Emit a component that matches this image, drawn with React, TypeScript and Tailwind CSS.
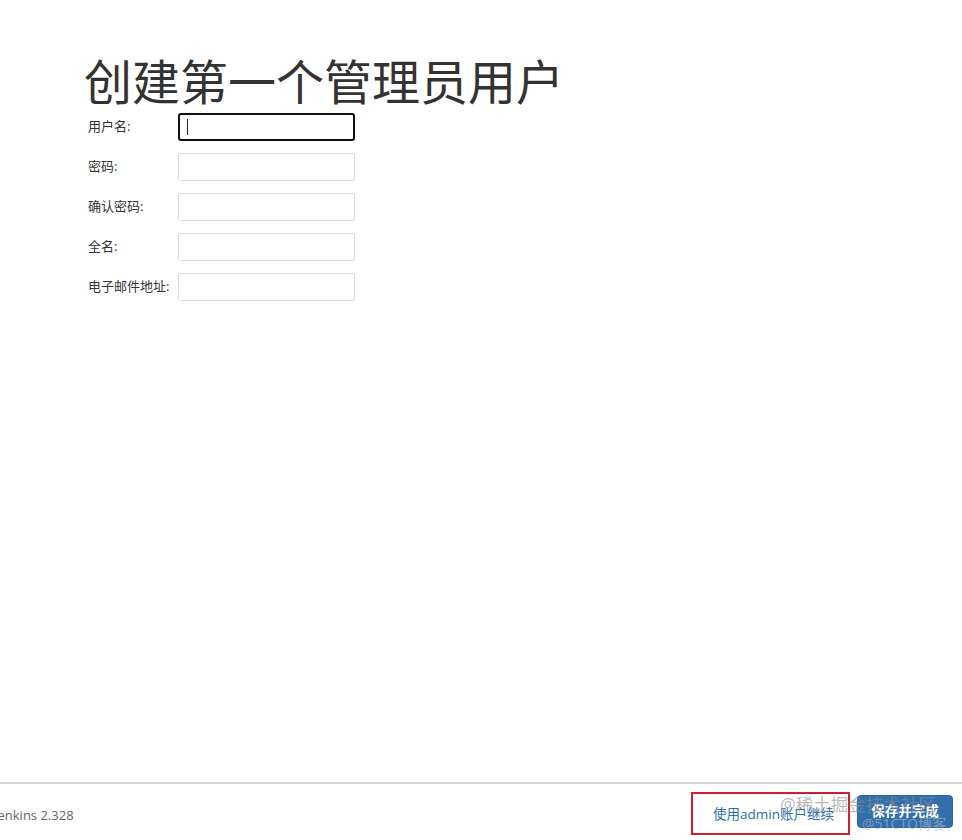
import React from "react";

const font = { fontFamily: '"Open Sans", "Noto Sans CJK SC", sans-serif' };

const fields = ["用户名:", "密码:", "确认密码:", "全名:", "电子邮件地址:"];

export default function App() {
  return (
    <div className="h-[840px] w-[962px] bg-white flex flex-col overflow-hidden text-[#333]" style={font}>
      <div className="flex-1 pl-[84px] pt-[51px]">
        <h1 className="text-[48px] leading-[61px] font-normal text-[#333] tracking-[0px]">创建第一个管理员用户</h1>
        <div className="flex flex-col gap-[12px] pl-[4px] mt-[1px]">
          {fields.map((f, i) => (
            <div key={f} className="flex items-center">
              <label className="w-[90px] text-[13px] text-[#333] whitespace-nowrap">{f}</label>
              {i === 0 ? (
                <div className="w-[177px] h-[28px] border-2 border-[#111] rounded-[3px] flex items-center pl-[7px]">
                  <div className="w-[1px] h-[16px] bg-[#222]" />
                </div>
              ) : (
                <div className="w-[177px] h-[28px] border border-[#ddd] rounded-[2px]" />
              )}
            </div>
          ))}
        </div>
      </div>
      <div className="h-[58px] border-t-2 border-[#d4d4d4] flex items-center justify-between pr-[9px] relative">
        <span className="text-[13px] text-[#666] ml-[-6px] mt-[8px]">Jenkins 2.328</span>
        <div className="flex items-center gap-[7px] mt-[2px]">
          <div className="w-[159px] h-[43px] border-2 border-[#d0202e] flex items-center pl-[20px]">
            <span className="text-[13.5px] text-[#2d6fa8] mt-[2px]">使用admin账户继续</span>
          </div>
          <button className="w-[96px] h-[33px] bg-[#3170ad] rounded-[4px] text-white text-[13.5px] font-semibold mt-[-4px] border border-[#2c65a0]">保存并完成</button>
        </div>
        <span className="absolute left-[780px] top-[7px] text-[17.5px] text-[#8a8a8a]/60 whitespace-nowrap">@稀土掘金技术社区</span>
        <span className="absolute left-[862px] top-[29px] text-[14px] text-[#bbb]/60 whitespace-nowrap">@51CTO博客</span>
      </div>
    </div>
  );
}
